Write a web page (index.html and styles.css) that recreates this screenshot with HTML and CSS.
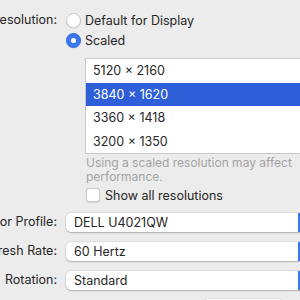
FILE: index.html
```html
<!DOCTYPE html>
<html lang="en">
<head>
  <meta charset="UTF-8">
  <title>Display</title>
  <link rel="stylesheet" href="styles.css">
</head>
<body>
  <div class="panel">
    <div class="label res-label">Resolution:</div>
    <div class="res-options">
      <div class="radio-row">
        <span class="radio"></span> Default for Display
      </div>
      <div class="radio-row">
        <span class="radio on"></span> Scaled
      </div>
      <div class="scaled-box">
        <ul class="res-list">
          <li>5120 × 2160</li>
          <li class="selected">3840 × 1620</li>
          <li>3360 × 1418</li>
          <li>3200 × 1350</li>
        </ul>
        <p class="hint">Using a scaled resolution may affect performance.</p>
        <div class="check-row">
          <span class="checkbox"></span> Show all resolutions
        </div>
      </div>
    </div>

    <div class="label">Color Profile:</div>
    <div class="popup"><span class="popup-text">DELL U4021QW</span><span class="popup-arrow"></span></div>

    <div class="label">Refresh Rate:</div>
    <div class="popup"><span class="popup-text">60 Hertz</span><span class="popup-arrow"></span></div>

    <div class="label">Rotation:</div>
    <div class="popup"><span class="popup-text">Standard</span><span class="popup-arrow"></span></div>

    <div></div>
    <div class="bottom-row"><span class="button"></span></div>
  </div>
</body>
</html>
```

FILE: styles.css
```css
body {
  margin: 0;
  background-color: #ececec;
  font-family: Inter, "Liberation Sans", sans-serif;
  font-size: 12.5px;
  color: #262626;
  overflow: hidden;
}

.panel {
  margin-left: -40px;
  padding-top: 12px;
  display: grid;
  grid-template-columns: 97px 420px;
  column-gap: 9px;
  row-gap: 9px;
  align-items: center;
}

.label {
  text-align: right;
  white-space: nowrap;
  line-height: 20px;
}

.res-label {
  align-self: start;
  line-height: 16px;
}

.res-options {
  display: flex;
  flex-direction: column;
}

.radio-row {
  display: flex;
  align-items: center;
  gap: 4px;
  height: 16px;
  margin-bottom: 4px;
}

.radio {
  width: 13px;
  height: 13px;
  border-radius: 50%;
  background: #fff;
  border: 1px solid #c9c9c9;
  box-shadow: 0 0.5px 1px rgba(0,0,0,0.1);
  box-sizing: content-box;
  flex: none;
}

.radio.on {
  background: #3a78f2;
  border-color: #2f68dc;
  position: relative;
}

.radio.on::after {
  content: "";
  position: absolute;
  width: 5px;
  height: 5px;
  border-radius: 50%;
  background: #fff;
  left: 4px;
  top: 4px;
}

.scaled-box {
  margin-left: 19px;
  margin-top: 6px;
}

.res-list {
  list-style: none;
  margin: 0;
  padding: 0;
  background: #fff;
  border: 1px solid #c8c8c8;
  border-right: none;
}

.res-list li {
  height: 23.5px;
  line-height: 23.5px;
  padding-left: 7px;
}

.res-list li.selected {
  background: #2e5fd8;
  color: #fff;
}

.hint {
  margin: 2px 0 0 1px;
  width: 210px;
  font-size: 12px;
  line-height: 14px;
  color: #a3a3a3;
}

.check-row {
  display: flex;
  align-items: center;
  gap: 5px;
  margin-top: 3px;
  margin-left: 1px;
  height: 16px;
}

.checkbox {
  width: 12px;
  height: 12px;
  background: #fff;
  border: 1px solid #c9c9c9;
  border-radius: 3px;
  box-shadow: 0 0.5px 1px rgba(0,0,0,0.1);
  flex: none;
}

.popup {
  display: flex;
  height: 19px;
  background: #fff;
  border-radius: 5px;
  box-shadow: 0 0 0 0.5px rgba(0,0,0,0.12), 0 1px 1.5px rgba(0,0,0,0.2);
  overflow: hidden;
}

.popup-text {
  flex: 1;
  padding-left: 8px;
  line-height: 19px;
}

.popup-arrow {
  width: 188px;
  background: #3a78f2;
  flex: none;
}

.bottom-row {
  height: 20px;
  padding-left: 137px;
}

.button {
  display: block;
  width: 80px;
  height: 20px;
  background: #fff;
  border-radius: 5px;
  box-shadow: 0 0 0 0.5px rgba(0,0,0,0.12), 0 1px 1.5px rgba(0,0,0,0.2);
}
```
